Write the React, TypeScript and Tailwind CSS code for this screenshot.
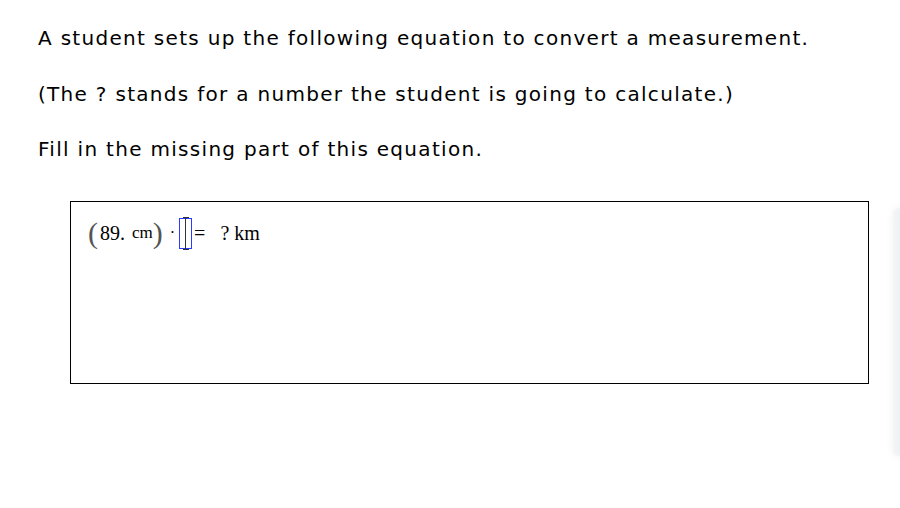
export default function App() {
  return (
    <div className="relative h-[508px] w-[900px] overflow-hidden bg-white font-['DejaVu_Sans',sans-serif] text-black">
      <div className="pl-[38px] pt-[24px] tracking-[1.3px]">
        <p className="text-[20px] leading-[28px]">A student sets up the following equation to convert a measurement.</p>
        <p className="mt-[28px] text-[20px] leading-[28px]">(The ? stands for a number the student is going to calculate.)</p>
        <p className="mt-[27px] text-[20px] leading-[28px]">Fill in the missing part of this equation.</p>
      </div>

      <div className="ml-[70px] mt-[38px] h-[183px] w-[799px] border border-black">
        <div className="flex items-center pl-[17px] pt-[14px] font-['Liberation_Serif',serif]">
          <span className="text-[30px] leading-[34px] text-[#555]">(</span>
          <span className="ml-[2px] text-[20px] leading-[34px]">89.</span>
          <span className="ml-[7px] text-[17px] leading-[34px]">cm</span>
          <span className="text-[30px] leading-[34px] text-[#555]">)</span>
          <span className="ml-[7px] text-[16px] leading-[34px]">·</span>
          <span className="relative ml-[4px] flex h-[31px] w-[13px] items-center justify-center border-[1.5px] border-[#2b3bff]">
            <span className="h-[33px] w-px bg-[#333]" />
            <span className="absolute -top-[2px] h-px w-[6px] bg-[#333]" />
            <span className="absolute -bottom-[2px] h-px w-[6px] bg-[#333]" />
          </span>
          <span className="ml-[2px] text-[20px] leading-[34px]">=</span>
          <span className="ml-[15px] text-[20px] leading-[34px]">? km</span>
        </div>
      </div>

      <div className="absolute left-[893px] top-[208px] h-[248px] w-[24px] rounded-l-[6px] bg-gradient-to-r from-[#f3f5f7] to-[#e4e8ec] shadow-[0_0_8px_rgba(0,0,0,0.06)]" />
    </div>
  );
}
